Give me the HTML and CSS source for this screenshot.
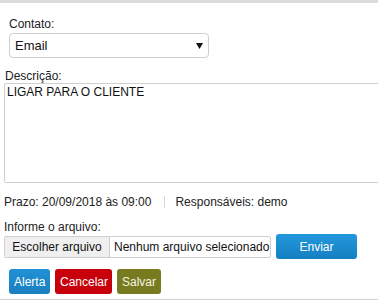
FILE: index.html
```html
<!DOCTYPE html>
<html lang="pt-BR">
<head>
<meta charset="utf-8">
<title>Tarefa</title>
<link rel="stylesheet" href="styles.css">
</head>
<body>
<div class="topbar"></div>
<div class="page">
  <label class="label label-contato" for="contato">Contato:</label>
  <div class="select-wrap">
    <select id="contato" class="select">
      <option>Email</option>
    </select>
    <svg class="select-arrow" width="7" height="6" viewBox="0 0 7 6" aria-hidden="true"><polygon points="0,0 7,0 3.5,6" fill="#111"/></svg>
  </div>

  <label class="label label-desc" for="desc">Descrição:</label>
  <textarea id="desc" class="textarea">LIGAR PARA O CLIENTE</textarea>

  <div class="meta">
    <span>Prazo: 20/09/2018 às 09:00</span>
    <span class="sep"></span>
    <span>Responsáveis: demo</span>
  </div>

  <div class="label label-file">Informe o arquivo:</div>
  <div class="file-row">
    <div class="file">
      <span class="file-btn">Escolher arquivo</span>
      <span class="file-name">Nenhum arquivo selecionado</span>
    </div>
    <button class="btn btn-enviar">Enviar</button>
  </div>

  <div class="actions">
    <button class="btn btn-alerta">Alerta</button>
    <button class="btn btn-cancelar">Cancelar</button>
    <button class="btn btn-salvar">Salvar</button>
  </div>
</div>
<div class="bottom-line"></div>
</body>
</html>
```

FILE: styles.css
```css
html, body {
  margin: 0;
  padding: 0;
  background: #fff;
}
body {
  width: 378px;
  height: 306px;
  overflow: hidden;
  font-family: "Liberation Sans", Arial, sans-serif;
  font-size: 12px;
  line-height: 14px;
  color: #222;
}
.topbar {
  height: 3px;
  background: #dcdcdc;
}
.page {
  padding: 0 0 0 4px;
  display: flex;
  flex-direction: column;
  align-items: flex-start;
}
.label {
  display: block;
  line-height: 14px;
  color: #222;
}
.label-contato {
  margin-top: 14px;
  margin-left: 5px;
}
.select-wrap {
  position: relative;
  margin-top: 2px;
  margin-left: 5px;
  width: 200px;
  height: 25px;
}
.select {
  -webkit-appearance: none;
  appearance: none;
  box-sizing: border-box;
  width: 200px;
  height: 25px;
  margin: 0;
  padding: 0 0 0 5px;
  border: 1px solid #cfcfcf;
  border-radius: 4px;
  background: #fff;
  font-family: "Liberation Sans", Arial, sans-serif;
  font-size: 13px;
  color: #111;
}
.select-arrow {
  position: absolute;
  right: 6px;
  top: 10px;
  pointer-events: none;
}
.label-desc {
  margin-top: 11px;
  margin-left: 1px;
}
.textarea {
  box-sizing: border-box;
  width: 380px;
  height: 100px;
  margin: 0;
  padding: 1px 2px;
  border: 1px solid #cfcfcf;
  border-radius: 2px;
  resize: none;
  font-family: "Liberation Sans", Arial, sans-serif;
  font-size: 12px;
  line-height: 14px;
  color: #111;
  display: block;
}
.meta {
  margin-top: 12px;
  display: flex;
  align-items: center;
  line-height: 14px;
}
.sep {
  width: 1px;
  height: 12px;
  background: #d6d6d6;
  margin: 0 10px 0 13px;
}
.label-file {
  margin-top: 11px;
}
.file-row {
  display: flex;
  align-items: center;
  gap: 5px;
}
.file {
  box-sizing: border-box;
  width: 267px;
  height: 22px;
  border: 1px solid #cfcfcf;
  border-radius: 2px;
  display: flex;
  align-items: stretch;
  overflow: hidden;
  background: #fff;
}
.file-btn {
  box-sizing: border-box;
  width: 105px;
  background: #efefef;
  border-right: 1px solid #cfcfcf;
  display: flex;
  align-items: center;
  justify-content: center;
  color: #111;
}
.file-name {
  display: flex;
  align-items: center;
  padding-left: 4px;
  color: #111;
  white-space: nowrap;
}
.btn {
  box-sizing: border-box;
  height: 25px;
  border: 0;
  border-radius: 3px;
  margin: 0;
  padding: 0 5px;
  font-family: "Liberation Sans", Arial, sans-serif;
  font-size: 12px;
  color: #fff;
  cursor: pointer;
}
.btn-enviar {
  width: 81px;
  background: linear-gradient(#2298dc, #1580c2);
}
.actions {
  margin-top: 10px;
  margin-left: 5px;
  display: flex;
  gap: 5px;
}
.btn-alerta {
  width: 41px;
  background: linear-gradient(#2191d5, #1a7fbf);
}
.btn-cancelar {
  width: 57px;
  background: #c8000b;
}
.btn-salvar {
  width: 44px;
  background: #787a20;
  color: #f4f4e4;
}
.bottom-line {
  margin-top: 5px;
  height: 1px;
  background: #d2d2d2;
}
```
